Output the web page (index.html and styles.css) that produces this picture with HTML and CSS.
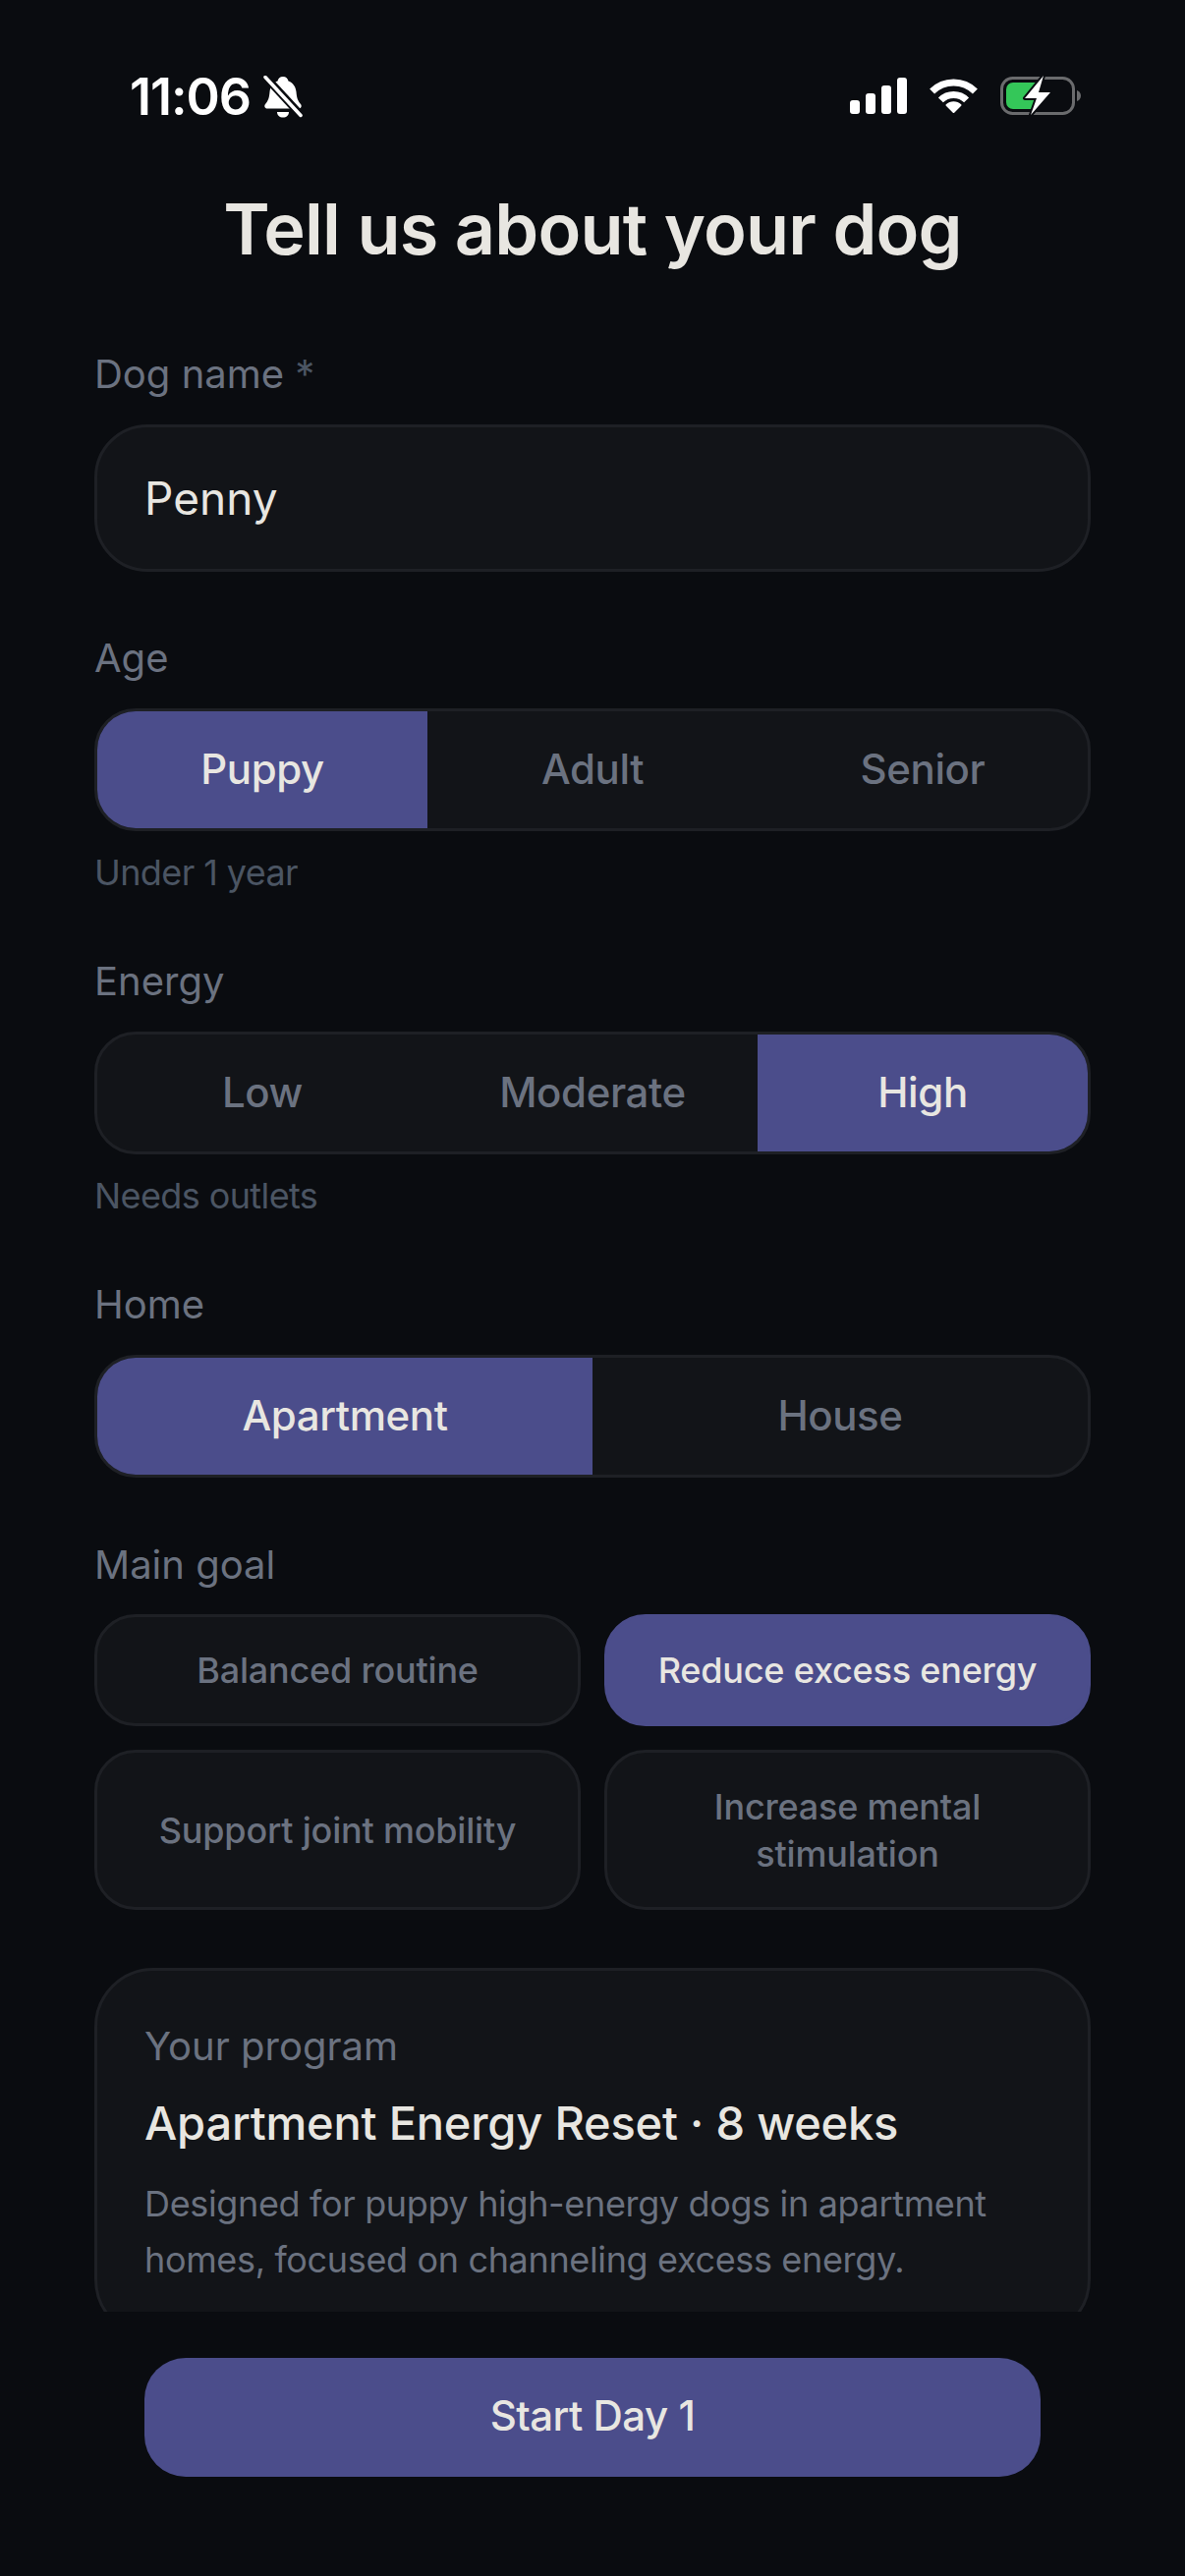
FILE: index.html
```html
<!DOCTYPE html>
<html lang="en">
<head>
    <meta charset="UTF-8">
    <meta name="viewport" content="width=device-width, initial-scale=1.0">
    <title>Tell us about your dog</title>
    <link rel="stylesheet" href="styles.css">
</head>
<body>
    <div class="status-bar">
        <div class="status-left">
            <span class="time">11:06</span>
            <svg class="bell" viewBox="0 0 40 43">
                <path d="M20 1c3 0 5 2 5.500 4.500 5 2 7.500 6 8 11 .5 6 1.500 9 4.500 12.500 1.500 2 .5 4.500-2 4.500H4c-2.500 0-3.500-2.500-2-4.500 3-3.500 4-6.500 4.500-12.500.5-5 3-9 8-11C15 3 17 1 20 1z" fill="#fff"/>
                <path d="M14 37h12c0 3.500-2.500 5.500-6 5.500s-6-2-6-5.500z" fill="#fff"/>
                <path d="M2 1l36 39" stroke="#0a0c10" stroke-width="8"/>
                <path d="M2 1.500l36 39" stroke="#fff" stroke-width="3.500" stroke-linecap="round"/>
            </svg>
        </div>
        <div class="status-right">
            <svg class="signal" viewBox="0 0 58 37" fill="#fff">
                <rect x="0" y="23" width="10" height="14" rx="3"/>
                <rect x="16" y="16" width="10" height="21" rx="3"/>
                <rect x="32" y="8" width="10" height="29" rx="3"/>
                <rect x="48" y="0" width="10" height="37" rx="3"/>
            </svg>
            <svg class="wifi" viewBox="0 0 51 37" fill="none" stroke="#fff">
                <path d="M3.600 14.100a31 31 0 0 1 43.800 0" stroke-width="7"/>
                <path d="M12.400 22.900a18.500 18.500 0 0 1 26.200 0" stroke-width="7"/>
                <path d="M25.500 35l-7-7a10 10 0 0 1 14 0z" fill="#fff" stroke-width="2" stroke-linejoin="round"/>
            </svg>
            <svg class="battery" viewBox="0 0 82 41">
                <rect x="1.500" y="2.500" width="73" height="36" rx="11" fill="none" stroke="#6a6b6d" stroke-width="3"/>
                <path d="M78 15c2 .5 4 2.500 4 5.500s-2 5-4 5.500z" fill="#6a6b6d"/>
                <path d="M13 7h23v27H13a7 7 0 0 1-7-7V14a7 7 0 0 1 7-7z" fill="#34c759"/>
                <path d="M44 0L25 23h12l-6 17 20-23H39z" fill="#fff" stroke="#0a0c10" stroke-width="4" paint-order="stroke" stroke-linejoin="round"/>
            </svg>
        </div>
    </div>

    <div class="scroll">
        <h1>Tell us about your dog</h1>

        <div class="label label-name">Dog name <span class="star">*</span></div>
        <div class="field">Penny</div>

        <div class="label label-age">Age</div>
        <div class="segment">
            <div class="seg-item active">Puppy</div>
            <div class="seg-item">Adult</div>
            <div class="seg-item">Senior</div>
        </div>
        <div class="hint">Under 1 year</div>

        <div class="label label-energy">Energy</div>
        <div class="segment">
            <div class="seg-item">Low</div>
            <div class="seg-item">Moderate</div>
            <div class="seg-item active">High</div>
        </div>
        <div class="hint">Needs outlets</div>

        <div class="label label-energy">Home</div>
        <div class="segment">
            <div class="seg-item active">Apartment</div>
            <div class="seg-item">House</div>
        </div>

        <div class="label label-goal">Main goal</div>
        <div class="goals">
            <div class="goal">Balanced routine</div>
            <div class="goal active">Reduce excess energy</div>
            <div class="goal">Support joint mobility</div>
            <div class="goal">Increase mental<br>stimulation</div>
        </div>

        <div class="program">
            <div class="program-label">Your program</div>
            <div class="program-title">Apartment Energy Reset · 8 weeks</div>
            <p class="program-desc">Designed for puppy high-energy dogs in apartment homes, focused on channeling excess energy.</p>
        </div>
    </div>

    <div class="footer">
        <div class="start-btn">Start Day 1</div>
    </div>
</body>
</html>
```

FILE: styles.css
```css
* {
    box-sizing: border-box;
}
body {
    margin: 0;
    width: 1206px;
    height: 2622px;
    overflow: hidden;
    display: flex;
    flex-direction: column;
    font-family: 'Inter', 'Noto Sans', sans-serif;
    color: #6b7280;
    background-color: #0a0c10;
}
.status-bar {
    height: 140px;
    flex-shrink: 0;
    display: flex;
    justify-content: space-between;
    align-items: flex-start;
    padding: 77px 106px 0 132px;
}
.status-left, .status-right {
    display: flex;
    align-items: center;
}
.time {
    font-size: 52px;
    line-height: 43px;
    font-weight: 600;
    color: #fff;
    letter-spacing: -1px;
}
.bell {
    width: 40px;
    height: 43px;
    margin-left: 13px;
}
.signal {
    width: 58px;
    height: 37px;
}
.wifi {
    width: 51px;
    height: 37px;
    margin-left: 22px;
}
.battery {
    width: 82px;
    height: 41px;
    margin-left: 22px;
}
.scroll {
    flex: 1;
    min-height: 0;
    overflow: hidden;
    padding: 48px 96px 0;
}
h1 {
    margin: 0;
    text-align: center;
    font-size: 72px;
    line-height: 90px;
    font-weight: 600;
    color: #e8e6e1;
    letter-spacing: -0.8px;
}
.label {
    font-size: 40px;
    line-height: 56px;
    color: #6b7280;
}
.label-name {
    margin-top: 75px;
}
.star {
    color: #4b5563;
}
.label-age {
    margin-top: 60px;
}
.label-energy {
    margin-top: 62px;
}
.label-goal {
    margin-top: 61px;
}
.field {
    margin-top: 23px;
    height: 150px;
    padding: 0 48px;
    display: flex;
    align-items: center;
    font-size: 46px;
    color: #e8e6e1;
    background-color: #121418;
    border: 3px solid #1e2025;
    border-radius: 54px;
}
.segment {
    margin-top: 23px;
    height: 125px;
    display: flex;
    background-color: #121418;
    border: 3px solid #1e2025;
    border-radius: 42px;
    overflow: hidden;
}
.seg-item {
    flex: 1;
    display: flex;
    align-items: center;
    justify-content: center;
    padding-bottom: 3px;
    font-size: 42px;
    font-weight: 500;
    letter-spacing: -0.4px;
}
.active {
    color: #e8e6e1;
    background-color: #4b4d8b;
}
.hint {
    margin-top: 21px;
    font-size: 36px;
    line-height: 42px;
    color: #4b5563;
    letter-spacing: -0.6px;
}
.goals {
    margin-top: 22px;
    display: grid;
    grid-template-columns: 1fr 1fr;
    gap: 24px;
}
.goal {
    min-height: 114px;
    padding: 0 24px;
    display: flex;
    align-items: center;
    justify-content: center;
    text-align: center;
    font-size: 36px;
    line-height: 48px;
    font-weight: 500;
    letter-spacing: -0.2px;
    background-color: #121418;
    border: 3px solid #1e2025;
    border-radius: 42px;
}
.goal:nth-child(n+3) {
    min-height: 163px;
}
.goal.active {
    background-color: #4b4d8b;
    border-color: #4b4d8b;
    color: #e8e6e1;
}
.program {
    margin-top: 59px;
    padding: 49px 48px 48px;
    background-color: #121418;
    border: 3px solid #1e2025;
    border-radius: 60px;
}
.program-label {
    font-size: 40px;
    line-height: 56px;
}
.program-title {
    margin-top: 19px;
    font-size: 47px;
    line-height: 62px;
    font-weight: 500;
    color: #e8e6e1;
    letter-spacing: -0.2px;
}
.program-desc {
    margin: 23px 0 0;
    font-size: 36px;
    line-height: 57px;
    letter-spacing: -0.35px;
}
.footer {
    height: 269px;
    flex-shrink: 0;
    padding: 47px 147px 0;
    background-color: #0a0c10;
}
.start-btn {
    height: 121px;
    display: flex;
    align-items: center;
    justify-content: center;
    padding-bottom: 4px;
    font-size: 42px;
    font-weight: 500;
    color: #e8e6e1;
    background-color: #4b4d8b;
    border-radius: 42px;
    letter-spacing: -0.5px;
}
```
